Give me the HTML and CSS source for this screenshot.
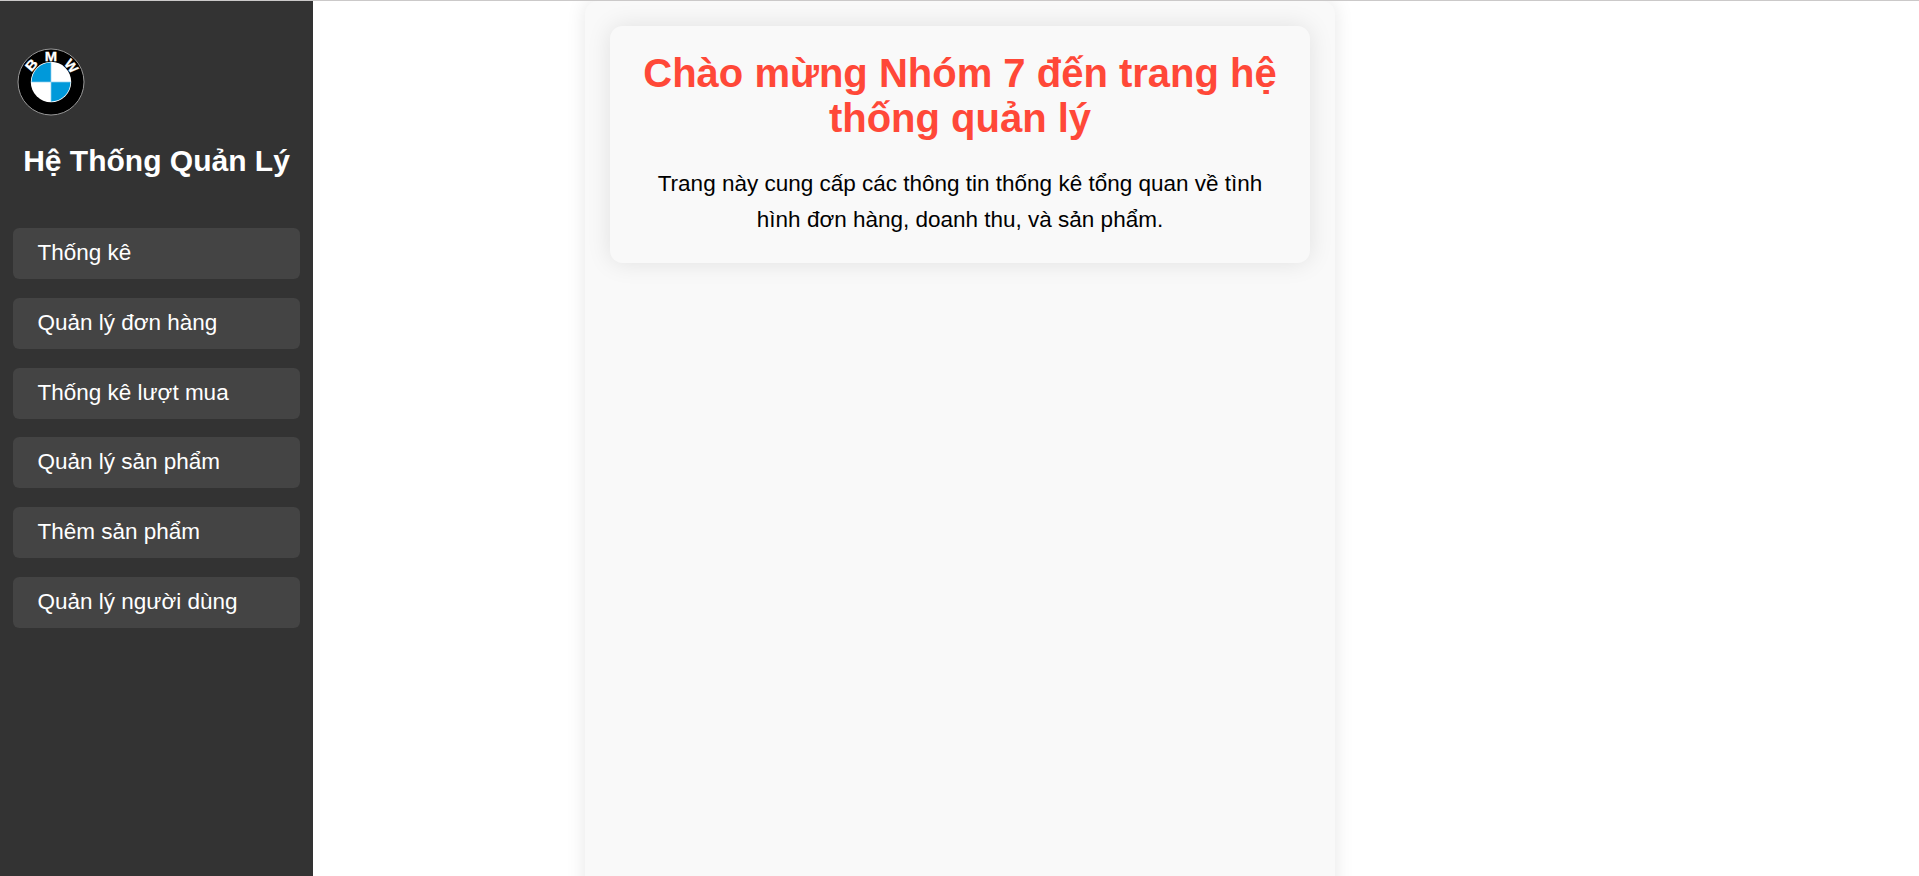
FILE: index.html
```html
<!DOCTYPE html>
<html lang="vi">
<head>
<meta charset="utf-8">
<title>Hệ Thống Quản Lý</title>
<link rel="stylesheet" href="styles.css">
</head>
<body>
<div class="page">
  <aside class="sidebar">
    <svg class="logo" viewBox="0 0 68 68" role="img" aria-label="BMW">
      <circle cx="34" cy="34" r="33" fill="#000" stroke="#a5a5a5" stroke-width="0.9"/>
      <circle cx="34" cy="34" r="20.2" fill="#fff"/>
      <path d="M34 34V14.6A19.4 19.4 0 0 0 14.6 34Z" fill="#0099da"/>
      <path d="M34 34V53.4A19.4 19.4 0 0 0 53.4 34Z" fill="#0099da"/>
      <path d="M34 14.5V53.5M14.5 34H53.5" stroke="#8fd0ee" stroke-width="0.7"/>
      <g class="logo-text">
        <text transform="rotate(-49 34 34) translate(34 12.8) scale(1.15 1)">B</text>
        <text transform="translate(34 12.6) scale(1.1 1)">M</text>
        <text transform="rotate(52 34 34) translate(34 12.8) scale(1.05 1)">W</text>
      </g>
    </svg>
    <h2 class="brand">Hệ Thống Quản Lý</h2>
    <nav class="menu">
      <a class="menu-link">Thống kê</a>
      <a class="menu-link">Quản lý đơn hàng</a>
      <a class="menu-link">Thống kê lượt mua</a>
      <a class="menu-link">Quản lý sản phẩm</a>
      <a class="menu-link">Thêm sản phẩm</a>
      <a class="menu-link">Quản lý người dùng</a>
    </nav>
  </aside>
  <main class="content">
    <section class="welcome">
      <h1 class="title">Chào mừng Nhóm 7 đến trang hệ thống quản lý</h1>
      <p class="intro">Trang này cung cấp các thông tin thống kê tổng quan về tình hình đơn hàng, doanh thu, và sản phẩm.</p>
    </section>
  </main>
</div>
</body>
</html>
```

FILE: styles.css
```css
* {
  box-sizing: border-box;
}

body {
  margin: 0;
  background: #fff;
  font-family: "Liberation Sans", Arial, sans-serif;
  overflow: hidden;
}

.page {
  display: grid;
  grid-template-columns: 313px 272px 750px 1fr;
  height: 876px;
  border-top: 1px solid #cbc9c9;
  overflow: hidden;
}

.sidebar {
  padding: 38px 13px 0;
  background: #333;
  color: #fff;
}

.logo {
  display: block;
  width: 68px;
  height: 68px;
  margin: 9.4px 0 0 3.7px;
}

.logo-text {
  fill: #fff;
  stroke: #fff;
  stroke-width: 0.3px;
  font-size: 13.5px;
  font-weight: bold;
  text-anchor: middle;
}

.brand {
  margin: 27.6px -1px 50px;
  font-size: 30px;
  line-height: 34px;
  text-align: center;
  white-space: nowrap;
}

.menu {
  display: flex;
  flex-direction: column;
  gap: 18.8px;
}

.menu-link {
  height: 51px;
  padding: 12px 24.5px 0;
  border-radius: 6.25px;
  background: #444;
  font-size: 22.5px;
  line-height: 25px;
  white-space: nowrap;
}

.content {
  grid-column: 3;
  height: 900px;
  padding: 25px;
  border-radius: 12.5px;
  background: #f9f9f9;
  box-shadow: 0 0 18.75px rgba(0, 0, 0, 0.1);
}

.welcome {
  height: 237px;
  padding: 25px;
  border-radius: 12.5px;
  background: #f9f9f9;
  box-shadow: 0 0 25px rgba(0, 0, 0, 0.1);
  text-align: center;
}

.title {
  margin: 0 0 25px;
  color: #ff4838;
  font-size: 40px;
  line-height: 45px;
}

.intro {
  margin: 0;
  color: #000;
  font-size: 22.5px;
  line-height: 36px;
}
```
